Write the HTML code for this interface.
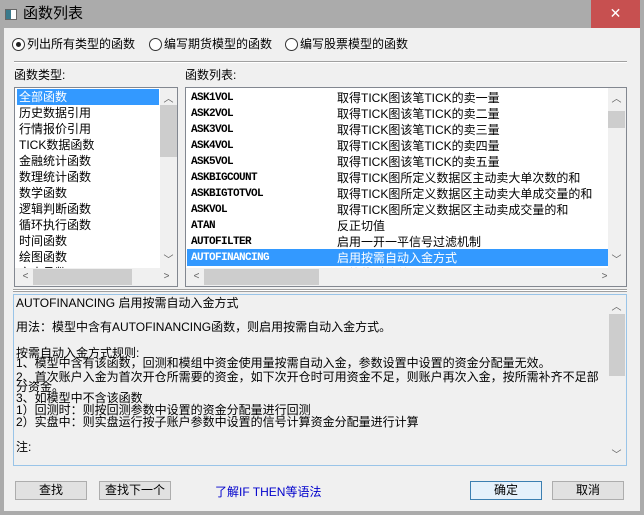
<!DOCTYPE html>
<html><head><meta charset="utf-8"><style>
*{margin:0;padding:0;box-sizing:border-box}
body{width:644px;height:515px;background:#ababab;position:relative;overflow:hidden;font-family:"Liberation Sans","Noto Sans CJK SC",sans-serif;font-size:12px;color:#000}
.a{position:absolute}
.t{white-space:nowrap;line-height:16px}
.close{left:591px;top:0;width:49px;height:28px;background:#c75050;color:#fff;text-align:center;line-height:26px;font-size:14px}
.body{left:4px;top:28px;width:636px;height:483px;background:#f0f0f0}
.radio{width:13px;height:13px;border:1px solid #333;border-radius:50%;background:#fff}
.box{border:1px solid #828790;background:#fff}
.sb{background:#f0f0f0}
.thumb{background:#cdcdcd}
.btn{border:1px solid #adadad;background:#e1e1e1;text-align:center;line-height:17px;height:19px}
.mono{font-family:"Liberation Mono",monospace;font-size:11px;letter-spacing:-0.6px;font-weight:bold}
.arr{color:#606060;font-size:10px;text-align:center;width:17px}
</style></head><body>
<div class="a" style="left:5px;top:9px;width:12px;height:11px;background:#fff;border:1px solid #666"><div style="width:5px;height:9px;background:#3a7a8c"></div></div>
<div class="a t" style="left:23px;top:5px;font-size:15px;line-height:18px">函数列表</div>
<div class="a close">✕</div>
<div class="a body"></div>

<div class="a radio" style="left:12px;top:38px"><div style="width:5px;height:5px;background:#222;border-radius:50%;margin:3px"></div></div>
<div class="a t" style="left:27px;top:36px">列出所有类型的函数</div>
<div class="a radio" style="left:149px;top:38px"></div>
<div class="a t" style="left:164px;top:36px">编写期货模型的函数</div>
<div class="a radio" style="left:285px;top:38px"></div>
<div class="a t" style="left:300px;top:36px">编写股票模型的函数</div>
<div class="a" style="left:14px;top:61px;width:613px;height:2px;border-top:1px solid #a0a0a0;border-bottom:1px solid #fff"></div>
<div class="a t" style="left:14px;top:67px">函数类型:</div>
<div class="a t" style="left:185px;top:67px">函数列表:</div>

<!-- left list -->
<div class="a box" style="left:14px;top:87px;width:164px;height:200px;overflow:hidden">
 <div class="a" style="left:2px;top:1px;width:142px;height:16px;background:#3399ff"></div>
 <div class="a t" style="left:4px;top:1px;font-size:12px;line-height:16px">
 <div style="color:#fff">全部函数</div><div>历史数据引用</div><div>行情报价引用</div><div>TICK数据函数</div><div>金融统计函数</div><div>数理统计函数</div><div>数学函数</div><div>逻辑判断函数</div><div>循环执行函数</div><div>时间函数</div><div>绘图函数</div><div>文本函数</div></div>
 <div class="a sb" style="left:145px;top:0;width:17px;height:180px"><div class="a thumb" style="left:0;top:17px;width:17px;height:52px"></div><div class="a arr" style="top:2px">︿</div><div class="a arr" style="top:163px">﹀</div></div>
 <div class="a sb" style="left:0;top:180px;width:162px;height:18px"><div class="a thumb" style="left:18px;top:1px;width:99px;height:16px"></div><div class="a arr" style="left:2px;top:3px">&lt;</div><div class="a arr" style="left:143px;top:3px">&gt;</div></div>
</div>

<!-- right list -->
<div class="a box" style="left:185px;top:87px;width:442px;height:200px;overflow:hidden">
 <div class="a" style="left:1px;top:161px;width:421px;height:17px;background:#3399ff"></div>
 <div class="a t mono" style="left:5px;top:2px;line-height:16px">
 <div>ASK1VOL</div><div>ASK2VOL</div><div>ASK3VOL</div><div>ASK4VOL</div><div>ASK5VOL</div><div>ASKBIGCOUNT</div><div>ASKBIGTOTVOL</div><div>ASKVOL</div><div>ATAN</div><div>AUTOFILTER</div><div style="color:#fff">AUTOFINANCING</div><div>AVEDEV</div></div>
 <div class="a t" style="left:151px;top:2px;line-height:16px">
 <div>取得TICK图该笔TICK的卖一量</div><div>取得TICK图该笔TICK的卖二量</div><div>取得TICK图该笔TICK的卖三量</div><div>取得TICK图该笔TICK的卖四量</div><div>取得TICK图该笔TICK的卖五量</div><div>取得TICK图所定义数据区主动卖大单次数的和</div><div>取得TICK图所定义数据区主动卖大单成交量的和</div><div>取得TICK图所定义数据区主动卖成交量的和</div><div>反正切值</div><div>启用一开一平信号过滤机制</div><div style="color:#fff">启用按需自动入金方式</div><div>平均绝对偏差</div></div>
 <div class="a sb" style="left:422px;top:0;width:18px;height:180px"><div class="a thumb" style="left:0;top:23px;width:17px;height:17px"></div><div class="a arr" style="top:2px">︿</div><div class="a arr" style="top:163px">﹀</div></div>
 <div class="a sb" style="left:0;top:180px;width:440px;height:18px"><div class="a thumb" style="left:18px;top:1px;width:115px;height:16px"></div><div class="a arr" style="left:2px;top:3px">&lt;</div><div class="a arr" style="left:410px;top:3px">&gt;</div></div>
</div>

<div class="a" style="left:13px;top:289px;width:614px;height:3px;border-top:1px solid #a0a0a0;border-bottom:1px solid #a0a0a0;background:#fff"></div>

<!-- description -->
<div class="a" style="left:13px;top:294px;width:614px;height:172px;border:1px solid #99c4e8;background:#f0f0f0;overflow:hidden">
 <div class="a t" style="left:2px;top:2px;font-size:12px;line-height:12px">
  <div style="height:24px">AUTOFINANCING 启用按需自动入金方式</div>
  <div style="height:24px">用法：模型中含有AUTOFINANCING函数，则启用按需自动入金方式。</div>
  <div style="height:10px;line-height:16px">按需自动入金方式规则:</div>
  <div style="height:15px;line-height:16px">1、模型中含有该函数，回测和模组中资金使用量按需自动入金，参数设置中设置的资金分配量无效。</div>
  <div style="height:11px;line-height:14px">2、首次账户入金为首次开仓所需要的资金，如下次开仓时可用资金不足，则账户再次入金，按所需补齐不足部</div>
  <div style="height:11px">分资金。</div>
  <div style="height:12px">3、如模型中不含该函数</div>
  <div style="height:12px">1）回测时：则按回测参数中设置的资金分配量进行回测</div>
  <div style="height:25px">2）实盘中：则实盘运行按子账户参数中设置的信号计算资金分配量进行计算</div>
  <div>注:</div>
 </div>
 <div class="a" style="left:594px;top:0;width:18px;height:170px;background:#f0f0f0"><div class="a thumb" style="left:1px;top:19px;width:16px;height:62px"></div><div class="a arr" style="top:3px">︿</div><div class="a arr" style="top:151px">﹀</div></div>
</div>

<div class="a btn" style="left:15px;top:481px;width:72px">查找</div>
<div class="a btn" style="left:99px;top:481px;width:72px">查找下一个</div>
<div class="a t" style="left:215px;top:484px;color:#0000cc">了解IF THEN等语法</div>
<div class="a btn" style="left:470px;top:481px;width:72px;border-color:#3c7fb1;background:#e5f1fb">确定</div>
<div class="a btn" style="left:552px;top:481px;width:72px">取消</div>
</body></html>
